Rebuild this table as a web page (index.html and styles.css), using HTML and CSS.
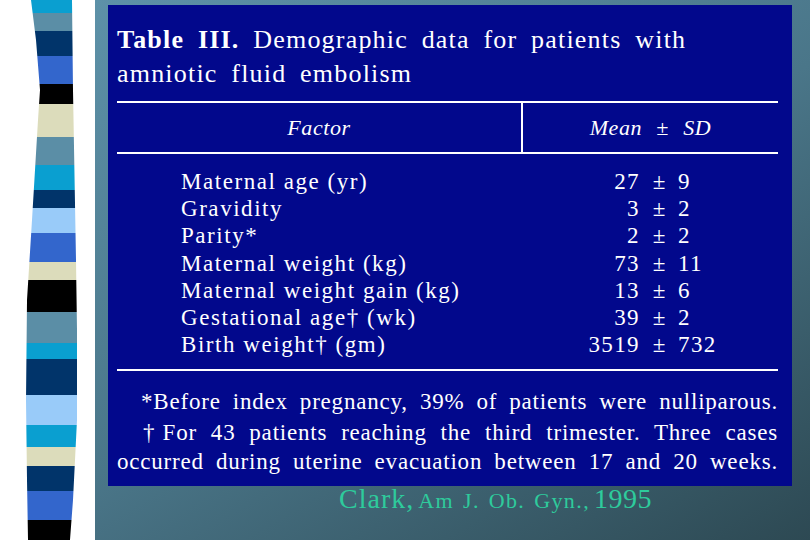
FILE: index.html
```html
<!DOCTYPE html>
<html>
<head>
<meta charset="utf-8">
<link rel="stylesheet" href="styles.css">
</head>
<body>
<div class="slide">
  <aside class="rail">
    <div class="strip">
      <div class="blk cyan" style="height:13px"></div>
      <div class="blk steel" style="height:18px"></div>
      <div class="blk navy" style="height:25px"></div>
      <div class="blk royal" style="height:28px"></div>
      <div class="blk black" style="height:20px"></div>
      <div class="blk cream" style="height:33px"></div>
      <div class="blk steel" style="height:28px"></div>
      <div class="blk cyan" style="height:25px"></div>
      <div class="blk navy" style="height:18px"></div>
      <div class="blk sky" style="height:25px"></div>
      <div class="blk royal" style="height:29px"></div>
      <div class="blk cream" style="height:18px"></div>
      <div class="blk black" style="height:32px"></div>
      <div class="blk steel" style="height:31px"></div>
      <div class="blk cyan" style="height:16px"></div>
      <div class="blk navy" style="height:36px"></div>
      <div class="blk sky" style="height:30px"></div>
      <div class="blk cyan" style="height:22px"></div>
      <div class="blk cream" style="height:19px"></div>
      <div class="blk navy" style="height:25px"></div>
      <div class="blk royal" style="height:29px"></div>
      <div class="blk black" style="height:20px"></div>
    </div>
  </aside>
  <main class="stage">
    <section class="panel">
      <h1 class="title">
        <span class="title-line"><b>Table III.</b> Demographic data for patients with</span>
        <span class="title-line">amniotic fluid embolism</span>
      </h1>
      <div class="rule"></div>
      <div class="head">
        <div class="head-cell factor">Factor</div>
        <div class="head-cell mean">Mean &nbsp;±&nbsp; SD</div>
      </div>
      <div class="rule"></div>
      <div class="rows">
        <div class="row"><span class="lab">Maternal age (yr)</span><span class="m">27</span><span class="pm">±</span><span class="sd">9</span></div>
        <div class="row"><span class="lab">Gravidity</span><span class="m">3</span><span class="pm">±</span><span class="sd">2</span></div>
        <div class="row"><span class="lab">Parity*</span><span class="m">2</span><span class="pm">±</span><span class="sd">2</span></div>
        <div class="row"><span class="lab">Maternal weight (kg)</span><span class="m">73</span><span class="pm">±</span><span class="sd">11</span></div>
        <div class="row"><span class="lab">Maternal weight gain (kg)</span><span class="m">13</span><span class="pm">±</span><span class="sd">6</span></div>
        <div class="row"><span class="lab">Gestational age† (wk)</span><span class="m">39</span><span class="pm">±</span><span class="sd">2</span></div>
        <div class="row"><span class="lab">Birth weight† (gm)</span><span class="m">3519</span><span class="pm">±</span><span class="sd">732</span></div>
      </div>
      <div class="rule"></div>
      <div class="notes">
        <p class="note ind1">*Before index pregnancy, 39% of patients were nulliparous.</p>
        <p class="note ind2">†For 43 patients reaching the third trimester. Three cases</p>
        <p class="note">occurred during uterine evacuation between 17 and 20 weeks.</p>
      </div>
    </section>
    <p class="caption"><span class="big">Clark,</span> <span class="small">Am J. Ob. Gyn.,</span> <span class="year">1995</span></p>
  </main>
</div>
</body>
</html>
```
FILE: styles.css
```css
html, body {
  margin: 0;
  padding: 0;
}
body {
  width: 810px;
  height: 540px;
  overflow: hidden;
  background: #ffffff;
  font-family: "Liberation Serif", "DejaVu Serif", serif;
}
.slide {
  display: flex;
  width: 810px;
  height: 540px;
}
.rail {
  width: 95px;
  flex: none;
  background: #ffffff;
  position: relative;
}
.strip {
  position: absolute;
  left: 24px;
  top: 0;
  width: 56px;
  height: 540px;
  display: flex;
  flex-direction: column;
  clip-path: polygon(7px 0, 48px 0, 49px 90px, 52px 260px, 53px 330px, 53px 420px, 49px 500px, 46px 540px, 4px 540px, 3px 480px, 2px 400px, 3px 300px, 8px 220px, 14px 120px, 16px 90px, 12px 40px);
}
.blk { flex: none; }
.cyan { background: #0a9fd0; }
.steel { background: #5b8ea6; }
.navy { background: #01346a; }
.royal { background: #3366cc; }
.black { background: #000000; }
.cream { background: #dcdcbb; }
.sky { background: #99cbf9; }

.stage {
  flex: 1;
  background: linear-gradient(150deg, #5d91a8 0%, #4a7689 50%, #2d4953 100%);
  padding: 5px 0 0 13px;
  box-sizing: border-box;
}
.panel {
  width: 684px;
  height: 481px;
  box-sizing: border-box;
  background: #02088c;
  color: #ffffff;
  padding: 18px 14px 0 9px;
}
.title {
  margin: 0;
  font-weight: normal;
  font-size: 26px;
  line-height: 34px;
  letter-spacing: 1.2px;
  word-spacing: 6px;
}
.title-line { display: block; }
.title b { font-weight: bold; }
.rule {
  height: 2px;
  background: #ffffff;
}
.title + .rule { margin-top: 10px; }
.head {
  display: grid;
  grid-template-columns: 404px 1fr;
  height: 49px;
}
.head-cell {
  font-style: italic;
  font-size: 22px;
  letter-spacing: 0.6px;
  line-height: 49px;
  text-align: center;
}
.mean {
  border-left: 2px solid #ffffff;
  word-spacing: 1px;
}
.rows {
  padding: 14px 0 11px 64px;
}
.row {
  display: grid;
  grid-template-columns: 400px 59px 38px auto;
  font-size: 23px;
  line-height: 27.2px;
  letter-spacing: 1.55px;
}
.m { text-align: right; letter-spacing: 1.4px; }
.pm { text-align: center; letter-spacing: 0; }
.sd { text-align: left; letter-spacing: 1.4px; }
.notes {
  padding-top: 16px;
}
.note {
  margin: 0;
  font-size: 23px;
  line-height: 29px;
  letter-spacing: 0.8px;
  text-align: justify;
  text-align-last: justify;
}
.ind1 { padding-left: 24px; margin-bottom: 2px; }
.ind2 { padding-left: 26px; }
.caption {
  margin: 0;
  padding-left: 231px;
  color: #2ecb9c;
  line-height: 26px;
  white-space: nowrap;
}
.big { font-size: 28px; letter-spacing: 1px; }
.small { font-size: 22px; letter-spacing: 1.4px; word-spacing: 2px; }
.year { font-size: 28px; letter-spacing: 0.5px; }
```
